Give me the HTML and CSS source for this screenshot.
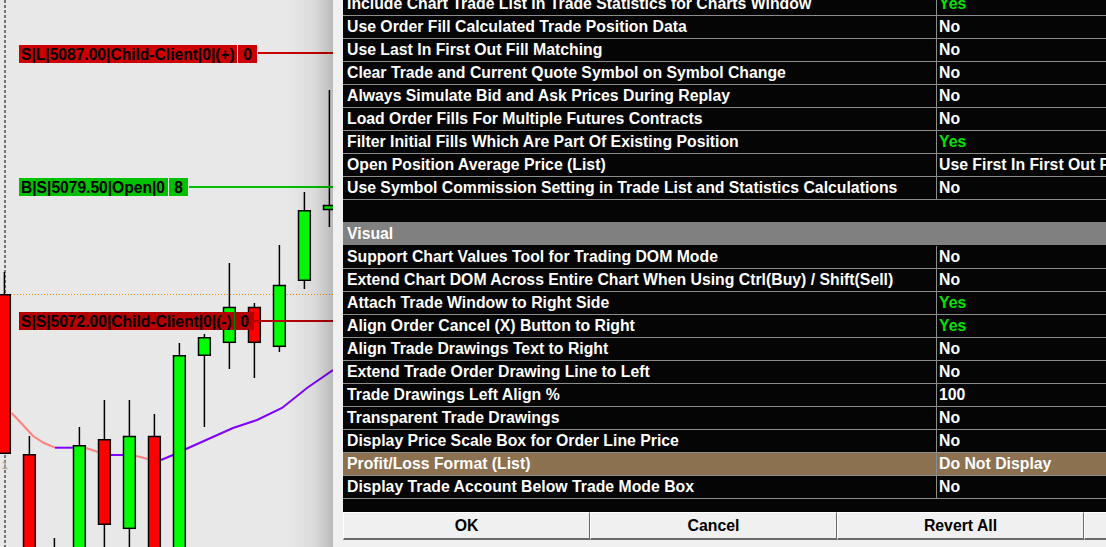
FILE: index.html
```html
<!DOCTYPE html>
<html>
<head>
<meta charset="utf-8">
<link rel="stylesheet" href="styles.css">
</head>
<body>
<div class="screen">
  <div class="chart">
    <svg class="plot" width="333" height="547" viewBox="0 0 333 547">
      <line x1="5" y1="0" x2="5" y2="547" stroke="#000" stroke-width="1" stroke-dasharray="3 2"/>
      <line x1="11" y1="294.5" x2="333" y2="294.5" stroke="#ff8a00" stroke-width="1" stroke-dasharray="1 2"/>
      <g fill="none" stroke-width="2">
        <polyline stroke="#ff8080" points="11.7,413 22,424 33,436 44,443 55,447.7"/>
        <polyline stroke="#8000ff" points="55,447.7 73,447.7"/>
        <polyline stroke="#ff8080" points="86,448 98,452"/>
        <polyline stroke="#8000ff" points="111,455 123,455"/>
        <polyline stroke="#ff8080" points="136,456 148,459"/>
        <polyline stroke="#8000ff" points="161,460 173,455 186,449 233,428 257,420 282,408 307,388 333,370"/>
      </g>
      <g stroke="#000" stroke-width="1.5">
        <line x1="4.4" y1="272" x2="4.4" y2="294"/>
        <rect x="-1.5" y="294.75" width="11.8" height="158.5" fill="#ff0000"/>
        <line x1="29.4" y1="436" x2="29.4" y2="454"/>
        <rect x="23.5" y="454.75" width="11.8" height="110" fill="#ff0000"/>
        <line x1="54.4" y1="538" x2="54.4" y2="547"/>
        <line x1="79.4" y1="427" x2="79.4" y2="445"/>
        <rect x="73.5" y="445.75" width="11.8" height="120" fill="#00ff00"/>
        <line x1="104.4" y1="400" x2="104.4" y2="547"/>
        <rect x="98.5" y="439.75" width="11.8" height="84.5" fill="#ff0000"/>
        <line x1="129.4" y1="400" x2="129.4" y2="547"/>
        <rect x="123.5" y="436.5" width="11.8" height="91.8" fill="#00ff00"/>
        <line x1="154.4" y1="414" x2="154.4" y2="436"/>
        <rect x="148.5" y="436.5" width="11.8" height="130" fill="#ff0000"/>
        <line x1="179.4" y1="343" x2="179.4" y2="355"/>
        <rect x="173.5" y="355.75" width="11.8" height="210" fill="#00ff00"/>
        <line x1="204.4" y1="334" x2="204.4" y2="427"/>
        <rect x="198.5" y="337.75" width="11.8" height="17.5" fill="#00ff00"/>
        <line x1="229.4" y1="263" x2="229.4" y2="369"/>
        <rect x="223.5" y="307.5" width="11.8" height="34.8" fill="#00ff00"/>
        <line x1="254.4" y1="303" x2="254.4" y2="378"/>
        <rect x="248.5" y="307.5" width="11.8" height="34.8" fill="#ff0000"/>
        <line x1="279.4" y1="245" x2="279.4" y2="352"/>
        <rect x="273.5" y="285.5" width="11.8" height="60.8" fill="#00ff00"/>
        <line x1="304.4" y1="192" x2="304.4" y2="289"/>
        <rect x="298.5" y="210.75" width="11.8" height="69.5" fill="#00ff00"/>
        <line x1="329.4" y1="90" x2="329.4" y2="227"/>
        <rect x="323.5" y="205.5" width="11.8" height="4" fill="#00ff00"/>
      </g>
    </svg>
    <span class="axis-num">1</span>

    <div class="tag tag-red tag-1">S|L|5087.00|Child-Client|0|(+)</div>
    <div class="tag tag-red tag-1b">0</div>
    <div class="ordline red-line line-1"></div>

    <div class="tag tag-green tag-2">B|S|5079.50|Open|0</div>
    <div class="tag tag-green tag-2b">8</div>
    <div class="ordline green-line line-2"></div>

    <div class="tag tag-dark tag-3">S|S|5072.00|Child-Client|0|(-)</div>
    <div class="tag tag-dark tag-3b">0</div>
    <div class="ordline dark-line line-3"></div>

    <div class="shadow"></div>
  </div>

  <div class="dialog">
    <div class="grid">
      <div class="row"><div class="name">Include Chart Trade List In Trade Statistics for Charts Window</div><div class="val yes">Yes</div></div>
      <div class="row"><div class="name">Use Order Fill Calculated Trade Position Data</div><div class="val">No</div></div>
      <div class="row"><div class="name">Use Last In First Out Fill Matching</div><div class="val">No</div></div>
      <div class="row"><div class="name">Clear Trade and Current Quote Symbol on Symbol Change</div><div class="val">No</div></div>
      <div class="row"><div class="name">Always Simulate Bid and Ask Prices During Replay</div><div class="val">No</div></div>
      <div class="row"><div class="name">Load Order Fills For Multiple Futures Contracts</div><div class="val">No</div></div>
      <div class="row"><div class="name">Filter Initial Fills Which Are Part Of Existing Position</div><div class="val yes">Yes</div></div>
      <div class="row"><div class="name">Open Position Average Price (List)</div><div class="val">Use First In First Out Fill Matching</div></div>
      <div class="row"><div class="name">Use Symbol Commission Setting in Trade List and Statistics Calculations</div><div class="val">No</div></div>
      <div class="row blank"></div>
      <div class="row section"><div class="name">Visual</div></div>
      <div class="row"><div class="name">Support Chart Values Tool for Trading DOM Mode</div><div class="val">No</div></div>
      <div class="row"><div class="name">Extend Chart DOM Across Entire Chart When Using Ctrl(Buy) / Shift(Sell)</div><div class="val">No</div></div>
      <div class="row"><div class="name">Attach Trade Window to Right Side</div><div class="val yes">Yes</div></div>
      <div class="row"><div class="name">Align Order Cancel (X) Button to Right</div><div class="val yes">Yes</div></div>
      <div class="row"><div class="name">Align Trade Drawings Text to Right</div><div class="val">No</div></div>
      <div class="row"><div class="name">Extend Trade Order Drawing Line to Left</div><div class="val">No</div></div>
      <div class="row"><div class="name">Trade Drawings Left Align %</div><div class="val">100</div></div>
      <div class="row"><div class="name">Transparent Trade Drawings</div><div class="val">No</div></div>
      <div class="row"><div class="name">Display Price Scale Box for Order Line Price</div><div class="val">No</div></div>
      <div class="row selected"><div class="name">Profit/Loss Format (List)</div><div class="val">Do Not Display</div></div>
      <div class="row"><div class="name">Display Trade Account Below Trade Mode Box</div><div class="val">No</div></div>
      <div class="filler"></div>
    </div>
    <div class="buttons">
      <div class="btn">OK</div>
      <div class="btn">Cancel</div>
      <div class="btn">Revert All</div>
      <div class="btn">Help</div>
    </div>
  </div>
</div>
</body>
</html>
```
FILE: styles.css
```css
html, body {
  margin: 0;
  padding: 0;
  background: #f0f0f0;
}

.screen {
  display: flex;
  width: 1106px;
  height: 547px;
  overflow: hidden;
  font-family: "Liberation Sans", Arial, sans-serif;
  font-weight: bold;
}

.chart {
  position: relative;
  flex: none;
  width: 333px;
  height: 547px;
  background: #e8e8e8;
  overflow: hidden;
}

.plot {
  display: block;
}

.axis-num {
  position: absolute;
  left: 2px;
  top: 460px;
  font-size: 10px;
  line-height: 12px;
  color: #b0a08c;
}

.tag {
  position: absolute;
  box-sizing: border-box;
  height: 18px;
  font-size: 15.6px;
  line-height: 19px;
  color: #000;
  white-space: nowrap;
  overflow: hidden;
}

.tag-red { background: #cc0000; }
.tag-green { background: #00c000; }
.tag-dark { background: #b40000; }

.tag-1 { left: 19px; top: 45px; width: 218px; padding-left: 2px; }
.tag-1b { left: 238px; top: 45px; width: 19px; text-align: center; }
.tag-2 { left: 19px; top: 178px; width: 149px; padding-left: 2px; }
.tag-2b { left: 169px; top: 178px; width: 19px; text-align: center; }
.tag-3 { left: 19px; top: 312px; width: 215px; padding-left: 2px; }
.tag-3b { left: 235px; top: 312px; width: 19px; text-align: center; }

.ordline {
  position: absolute;
  height: 2px;
}
.red-line { background: #c80000; }
.green-line { background: #00c000; }
.dark-line { background: #b40000; }
.line-1 { left: 258px; top: 52px; width: 75px; }
.line-2 { left: 189px; top: 186px; width: 144px; }
.line-3 { left: 254px; top: 320px; width: 79px; }

.shadow {
  position: absolute;
  top: 0;
  right: 0;
  width: 46px;
  height: 547px;
  background: linear-gradient(to right, rgba(0,0,0,0), rgba(0,0,0,0.06) 60%, rgba(0,0,0,0.2));
}

.dialog {
  flex: 1;
  min-width: 0;
  display: flex;
  flex-direction: column;
  padding-left: 10px;
  background: #f0f0f0;
  overflow: hidden;
}

.grid {
  margin-top: -7px;
  width: 800px;
  background: #050505;
  color: #fff;
  font-size: 15.8px;
}

.row {
  display: grid;
  grid-template-columns: 594px 1fr;
  height: 23px;
  box-sizing: border-box;
  border-bottom: 1px solid #8c8c8c;
  line-height: 22px;
  white-space: nowrap;
}

.name {
  box-sizing: border-box;
  padding-left: 4px;
  border-right: 1px solid #8c8c8c;
  overflow: hidden;
}

.val {
  padding-left: 2px;
  overflow: hidden;
}

.yes { color: #00e400; }

.blank {
  display: block;
  border-bottom-color: #808080;
}

.section {
  display: block;
  background: #808080;
  border-bottom-color: #050505;
}
.section .name {
  border-right: none;
  padding-left: 4px;
}

.selected {
  background: #8c7151;
}

.filler {
  height: 13px;
}

.buttons {
  display: flex;
  height: 28px;
}

.btn {
  flex: none;
  box-sizing: border-box;
  width: 247px;
  height: 28px;
  border-top: 1px solid #ffffff;
  border-left: 1px solid #ffffff;
  border-right: 1px solid #6a6a6a;
  border-bottom: 2px solid #6a6a6a;
  background: #f0f0f0;
  color: #000;
  font-size: 15.8px;
  line-height: 26px;
  text-align: center;
}
```
